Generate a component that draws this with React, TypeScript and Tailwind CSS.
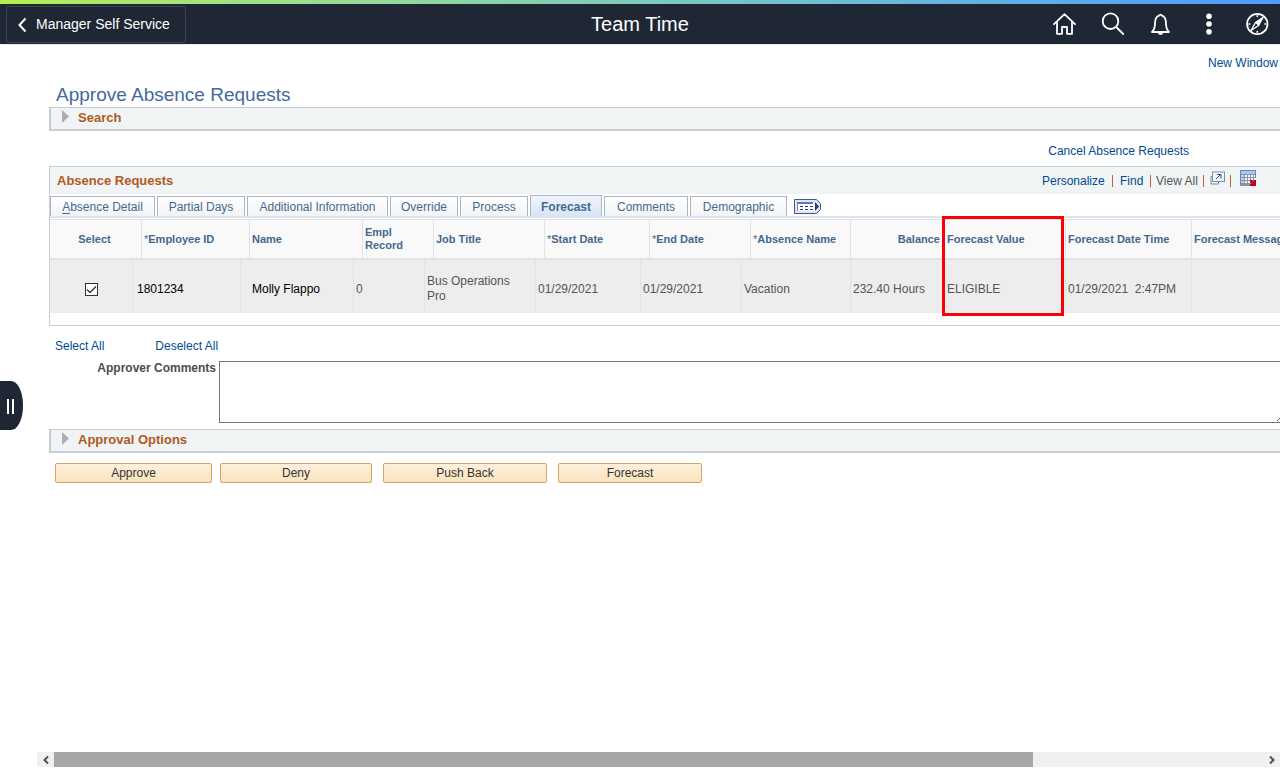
import type { ReactNode } from "react";

const tabs = [
  { label: "Absence Detail", width: "w-[105px]", accessKey: true },
  { label: "Partial Days", width: "w-[88px]" },
  { label: "Additional Information", width: "w-[141px]" },
  { label: "Override", width: "w-[68px]" },
  { label: "Process", width: "w-[68px]" },
  { label: "Forecast", width: "w-[72px]", active: true },
  { label: "Comments", width: "w-[84px]" },
  { label: "Demographic", width: "w-[97px]" },
];

const headings = [
  "*Employee ID",
  "Name",
  "Empl Record",
  "Job Title",
  "*Start Date",
  "*End Date",
  "*Absence Name",
  "Balance",
  "Forecast Value",
  "Forecast Date Time",
  "Forecast Message",
];

const actions = [
  { label: "Approve", style: "w-[157px] mr-2" },
  { label: "Deny", style: "w-[152px] mr-[11px]" },
  { label: "Push Back", style: "w-[164px] mr-[11px]" },
  { label: "Forecast", style: "w-[144px]" },
];

function TextLink({ children }: { children: ReactNode }) {
  return (
    <a href="#" className="whitespace-nowrap text-[#004b91]">
      {children}
    </a>
  );
}

function NavButton({ label, children }: { label: string; children: ReactNode }) {
  return (
    <button type="button" aria-label={label} className="size-6 text-white">
      <svg
        viewBox="0 0 24 24"
        className="size-6"
        fill="none"
        stroke="currentColor"
        strokeWidth="1.8"
        strokeLinejoin="round"
        strokeLinecap="round"
      >
        {children}
      </svg>
    </button>
  );
}

function TopBar() {
  return (
    <header className="shrink-0 border-b border-[#eaebec]">
      <div className="h-1 bg-linear-to-r from-[#b6ee4e] to-[#4e9bff]" />
      <div className="grid h-10 grid-cols-[1fr_auto_1fr] items-center bg-[#1e2733] text-white">
        <button
          type="button"
          className="ml-[6px] flex h-[37px] w-[180px] items-center rounded-[3px] border border-[#3b444f] pt-px pl-[10px] text-[14px]"
        >
          <svg viewBox="0 0 12 16" className="mr-[7px] h-4 w-3" fill="none" stroke="currentColor" strokeWidth="2">
            <path d="M8.5 1.5 2.5 8l6 6.5" />
          </svg>
          Manager Self Service
        </button>
        <h1 className="text-[20px] leading-6">Team Time</h1>
        <div className="flex justify-end gap-6 pr-[11px]">
          <NavButton label="Home">
            <path d="M1 12.200 11.500 2.200 22 12.200M4 9.800v12h5v-6.800h5v6.800h5v-12" />
          </NavButton>
          <NavButton label="Search">
            <circle cx="9.500" cy="9.200" r="7.800" />
            <path d="m15.200 15 7 7" />
          </NavButton>
          <NavButton label="Notifications">
            <path d="M3 20c2.600-2.400 3-5 3-8.700 0-4.200 1.700-6.900 4.100-7.700a1.500 1.500 0 0 1 2.800 0c2.400.8 4.100 3.500 4.100 7.700 0 3.700.4 6.300 3 8.700Z" />
            <path d="M9.800 20.800a1.900 1.900 0 0 0 3.600 0" />
          </NavButton>
          <NavButton label="Actions">
            <g fill="currentColor" stroke="none">
              <circle cx="12" cy="4.200" r="2.800" />
              <circle cx="12" cy="12" r="2.800" />
              <circle cx="12" cy="19.800" r="2.800" />
            </g>
          </NavButton>
          <NavButton label="Navigator">
            <circle cx="12.300" cy="12" r="10.200" />
            <path d="m18 5.500-4.500 8L6 18.500l4.500-8Z" strokeWidth="1.400" />
            <path d="m17.500 6-4.200 7.200-2.500-2.500Z" fill="currentColor" strokeWidth="1" />
            <path d="M12.300 4.500v-.8M12.300 20.300v-.8M4.800 12H4M20.600 12h-.8" strokeWidth="1.600" />
          </NavButton>
        </div>
      </div>
    </header>
  );
}

function CollapsedSection({ title }: { title: string }) {
  return (
    <button
      type="button"
      className="flex w-full items-start border-t border-b-2 border-l-2 border-t-[#c6ccd4] border-b-[#c8cdd6] border-l-[#c6ccd4] bg-[#f0f4f5] pb-px pl-[11px] text-[13px] leading-5 font-bold text-[#b05a1f]"
    >
      <svg viewBox="0 0 7 13" className="mt-[2px] mr-[9px] h-[13px] w-[7px]" fill="#aeaeae">
        <path d="M0 0 7 6.500 0 13Z" />
      </svg>
      {title}
    </button>
  );
}

function Separator() {
  return <span className="h-3 w-px bg-[#c2603f]" />;
}

function GridTools() {
  return (
    <div className="flex items-center text-[12px]">
      <div className="flex w-[78px] items-center justify-between pr-[7px]">
        <TextLink>Personalize</TextLink>
        <Separator />
      </div>
      <div className="flex w-9 items-center justify-between pr-[5px]">
        <TextLink>Find</TextLink>
        <Separator />
      </div>
      <div className="mr-[6px] flex w-[48px] items-center justify-between">
        <span className="whitespace-nowrap text-[#555]">View All</span>
        <Separator />
      </div>
      <a href="#" aria-label="Zoom" className="mb-[6px]">
        <svg viewBox="0 0 15 14" className="h-[14px] w-[15px]">
          <path d="M1 5.500v7.500h7.500v-2M1 5.500h2" fill="none" stroke="#7f8da0" />
          <rect x="2.500" y="1" width="12" height="9.500" fill="#eef7ff" stroke="#7d90a8" />
          <path d="M6 8 10.500 3.500M7 3.500h4v4" fill="none" stroke="#3f4c63" />
        </svg>
      </a>
      <span className="mx-[5px] flex">
        <Separator />
      </span>
      <a href="#" aria-label="Download" className="mb-[5px] ml-1">
        <svg viewBox="0 0 16 16" className="size-4">
          <rect width="16" height="16" fill="#8d93a3" />
          <rect width="15" height="4" fill="#a9c5f5" />
          <g fill="#f7f9fd">
            <path d="M5 5h2v2H5zM8 5h2v2H8zM11 5h2v2h-2zM5 8h2v2H5zM8 8h2v2H8zM11 8h2v2h-2zM5 11h2v2H5zM8 11h2v2H8zM14 5h2v2h-2zM14 8h2v2h-2z" />
          </g>
          <path d="M1 5h3v2H1zM1 8h3v2H1zM1 11h3v2H1z" fill="#b6cdf8" />
          <path d="M.5 15.500V.5h15V7" fill="none" stroke="#6583c8" />
          <path d="M10 10h2l2 1.500V10h2v6h-6v-2h2l-2-2Z" fill="#c00016" />
        </svg>
      </a>
    </div>
  );
}

function TabStrip() {
  return (
    <div role="tablist" className="flex h-6 items-end gap-[2px] border-b-2 border-[#dbe6f4]">
      {tabs.map((tab) => (
        <button
          key={tab.label}
          type="button"
          role="tab"
          aria-selected={!!tab.active}
          className={`${tab.width} border-x border-t border-[#a9b4c6] text-[12px] whitespace-nowrap text-[#446a92] ${
            tab.active
              ? "h-[21px] bg-linear-to-b from-[#f0f5fc] to-[#d9e5f5] pt-px font-bold"
              : "h-5 bg-linear-to-b from-white to-[#f3f3f3]"
          }`}
        >
          {tab.accessKey ? (
            <>
              <u className="underline-offset-2">A</u>bsence Detail
            </>
          ) : (
            tab.label
          )}
        </button>
      ))}
      <button type="button" aria-label="Show all columns" className="mb-[2px] ml-[5px]">
        <svg viewBox="0 0 27 15" className="h-[15px] w-[27px]">
          <path d="M.5.500h22l4 4v6l-4 4H.5Z" fill="#d9e9fb" stroke="#4e5677" />
          <rect x="3" y="3" width="17" height="9" fill="#fff" />
          <path d="M3 4h16" stroke="#6673bd" strokeWidth="2" />
          <path d="M3.500 4v8" stroke="#7987c8" />
          <path d="M6 7.500h3M11 7.500h3M16 7.500h3M6 10.500h3M11 10.500h3M16 10.500h3" stroke="#343a5c" />
          <path d="M21 3v9l4-4.500Z" fill="#2d3972" />
        </svg>
      </button>
    </div>
  );
}

function AbsenceTable() {
  const cell = "flex items-center border-l border-[#e2e2e2] pl-[2px] text-left";
  return (
    <div className="relative mt-px">
      <table className="block">
        <thead className="block">
          <tr className="grid h-[41px] grid-cols-[91px_108px_113px_71px_111px_105px_101px_100px_94px_121px_126px_1fr] border-t border-b-2 border-[#e2e2e2] bg-[#f9f9f9] text-[11px] leading-[13px] text-[#44688f]">
            <th className="flex items-center justify-center pr-[2px]">Select</th>
            {headings.map((heading) => (
              <th
                key={heading}
                className={`${cell} ${heading === "Balance" ? "justify-end pr-1" : ""} ${
                  heading === "Empl Record" ? "pr-6" : "whitespace-nowrap"
                }`}
              >
                {heading.startsWith("*") ? (
                  <span>
                    <span className="font-normal">*</span>
                    {heading.slice(1)}
                  </span>
                ) : (
                  heading
                )}
              </th>
            ))}
          </tr>
        </thead>
        <tbody className="block">
          <tr className="grid h-[53px] grid-cols-[82px_108px_113px_71px_111px_105px_101px_109px_94px_121px_126px_1fr] bg-[#ededed] text-[12px] leading-[15px] text-[#555] [&>td]:pt-[5px]">
            <td className="flex items-center justify-center">
              <span className="grid">
                <input
                  type="checkbox"
                  defaultChecked
                  aria-label="Select Molly Flappo"
                  className="peer size-[13px] appearance-none border border-[#333] bg-white [grid-area:1/1]"
                />
                <svg
                  viewBox="0 0 13 13"
                  className="pointer-events-none invisible size-[13px] [grid-area:1/1] peer-checked:visible"
                  fill="none"
                  stroke="#333"
                  strokeWidth="1.300"
                >
                  <path d="m2 6.500 3 3 6-6" />
                </svg>
              </span>
            </td>
            <td className="flex items-center border-l border-[#e2e2e2] pl-1 text-black">1801234</td>
            <td className="flex items-center border-l border-[#e2e2e2] pl-[11px] text-black">Molly Flappo</td>
            <td className={cell}>0</td>
            <td className={cell}>
              Bus Operations
              <br />
              Pro
            </td>
            <td className={cell}>01/29/2021</td>
            <td className={cell}>01/29/2021</td>
            <td className={cell}>Vacation</td>
            <td className={cell}>232.40 Hours</td>
            <td className={cell}>ELIGIBLE</td>
            <td className={`${cell} whitespace-pre`}>01/29/2021{"  "}2:47PM</td>
            <td className={cell} />
          </tr>
        </tbody>
      </table>
      <div className="pointer-events-none absolute -top-[3px] left-[892px] h-[100px] w-[122px] border-3 border-[#fb0007]" />
    </div>
  );
}

function ScrollBar() {
  return (
    <div className="mb-px ml-[37px] flex h-[15px] shrink-0 bg-[#f0f0f0] text-[#505050]">
      <button type="button" aria-label="Scroll left" className="flex w-[17px] items-center justify-center">
        <svg viewBox="0 0 6 8" className="h-2 w-[6px]" fill="none" stroke="currentColor" strokeWidth="2">
          <path d="M5 .5 1.500 4 5 7.500" />
        </svg>
      </button>
      <div className="flex-1">
        <div className="h-full w-[81%] bg-[#a6a6a6]" />
      </div>
      <button type="button" aria-label="Scroll right" className="flex w-[17px] items-center justify-center">
        <svg viewBox="0 0 6 8" className="h-2 w-[6px]" fill="none" stroke="currentColor" strokeWidth="2">
          <path d="M1 .5 4.500 4 1 7.500" />
        </svg>
      </button>
    </div>
  );
}

export default function App() {
  return (
    <div className="relative flex h-screen flex-col overflow-hidden bg-white font-['Liberation_Sans',Arial,sans-serif] text-[12px]">
      <TopBar />
      <main className="min-h-0 flex-1 overflow-hidden pl-[49px]">
        <div className="w-[calc(100%+60px)]">
          <div className="flex h-9 items-center justify-end pr-[64px]">
            <span className="w-[68px]">
              <TextLink>New Window</TextLink>
            </span>
          </div>
          <h2 className="h-[26px] pl-[7px] text-[19px] leading-7 text-[#44699c]">Approve Absence Requests</h2>
          <CollapsedSection title="Search" />
          <div className="flex h-[35px] items-center justify-end pt-[5px] pr-[151px]">
            <TextLink>Cancel Absence Requests</TextLink>
          </div>
          <section className="border border-[#c8ccd4] pb-3">
            <div className="flex h-[27px] items-center justify-between bg-[#f0f4f5] pr-[83px] pl-[7px]">
              <h3 className="text-[13px] font-bold text-[#b05a1f]">Absence Requests</h3>
              <GridTools />
            </div>
            <TabStrip />
            <AbsenceTable />
          </section>
          <div className="flex h-[35px] items-center gap-[51px] pt-1 pl-[6px]">
            <TextLink>Select All</TextLink>
            <TextLink>Deselect All</TextLink>
          </div>
          <div className="flex">
            <label htmlFor="comments" className="w-[170px] pr-[3px] text-right leading-[15px] font-bold text-[#4d4d4d]">
              Approver Comments
            </label>
            <textarea id="comments" className="mr-[54px] h-[62px] flex-1 border border-[#767676] bg-white p-1" />
          </div>
          <div className="pt-[6px]">
            <CollapsedSection title="Approval Options" />
          </div>
          <div className="flex pt-[10px] pl-[6px]">
            {actions.map((action) => (
              <button
                key={action.label}
                type="button"
                className={`${action.style} h-5 rounded-[2px] border border-[#dba36c] bg-linear-to-b from-[#fdf0dc] to-[#fae3bd] text-[12px] text-[#333]`}
              >
                {action.label}
              </button>
            ))}
          </div>
        </div>
      </main>
      <ScrollBar />
      <button
        type="button"
        aria-label="Open side panel"
        className="absolute top-[381px] left-0 flex h-[49px] w-[23px] items-center gap-[3px] rounded-r-[12px_24px] bg-[#1e2733] pt-px pl-[7px]"
      >
        <span className="h-[15px] w-[2px] bg-white" />
        <span className="h-[15px] w-[2px] bg-white" />
      </button>
    </div>
  );
}
